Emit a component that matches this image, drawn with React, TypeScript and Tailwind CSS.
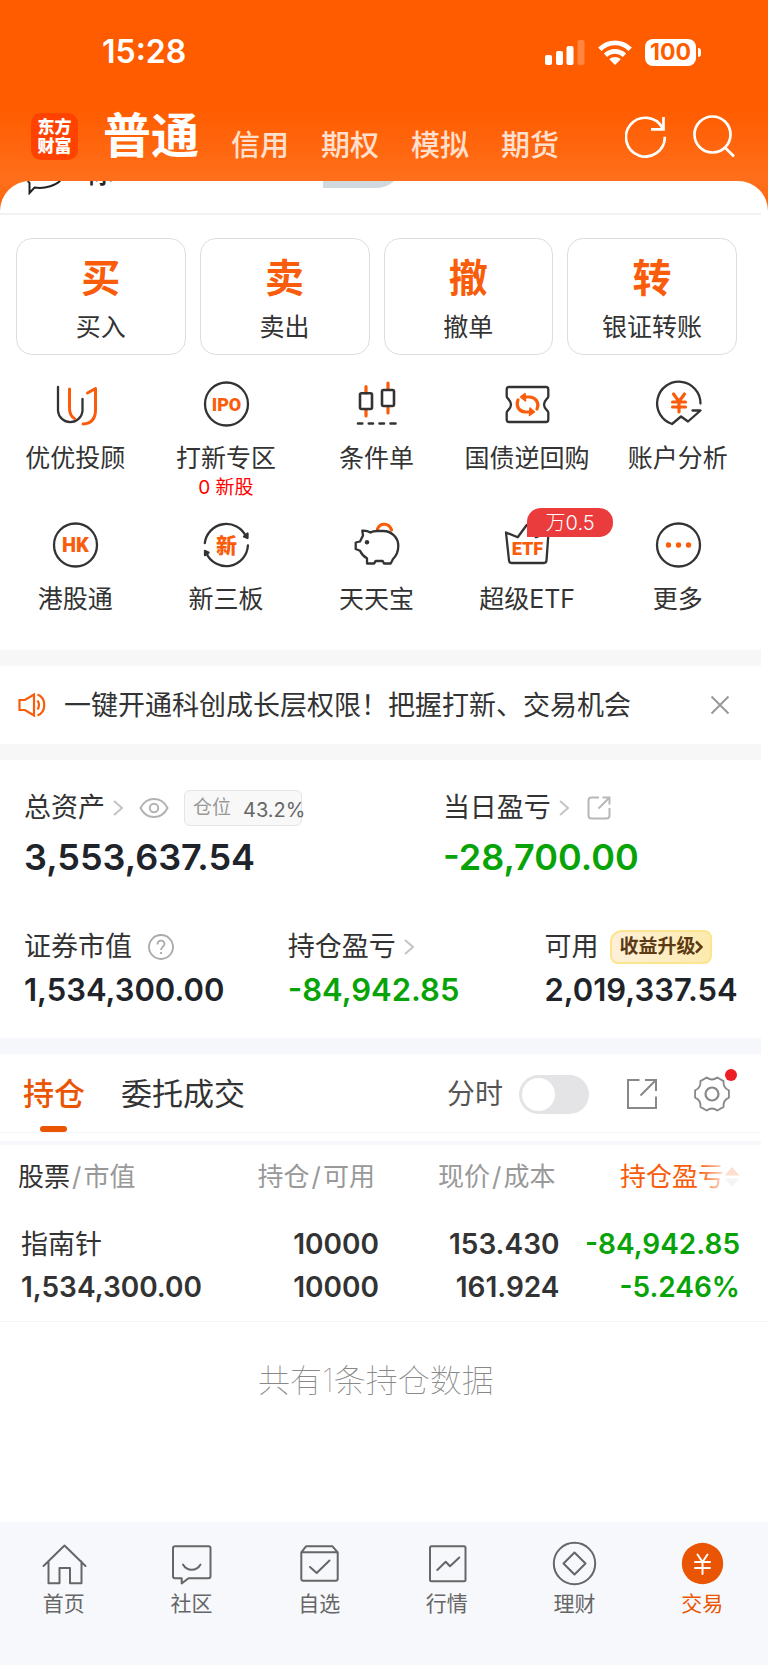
import React from 'react';

const ORANGE = '#f95d0b';
const DARK = '#333333';

type IconProps = { children: React.ReactNode };

// Base for the round function icons in the shortcut grid
const ShortcutSvg: React.FC<IconProps> = ({ children }) => (
  <svg
    viewBox="0 0 46 46"
    className="w-[46px] h-[46px] overflow-visible font-[Roboto,'Noto_Sans_CJK_SC',sans-serif]"
    fill="none"
    stroke={DARK}
    strokeWidth="2.3"
    strokeLinecap="round"
    strokeLinejoin="round"
    aria-hidden="true"
  >
    {children}
  </svg>
);

const NavSvg: React.FC<IconProps> = ({ children }) => (
  <svg
    viewBox="0 0 44 44"
    className="w-11 h-11 overflow-visible"
    fill="none"
    stroke="#666666"
    strokeWidth="2"
    strokeLinecap="round"
    strokeLinejoin="round"
    aria-hidden="true"
  >
    {children}
  </svg>
);

const Chevron: React.FC = () => (
  <svg viewBox="0 0 10 16" className="w-[10px] h-4" fill="none" stroke="#c4c4c4" strokeWidth="2" aria-hidden="true">
    <path d="M1 1L9 8L1 15" />
  </svg>
);

const tradeButtons = [
  { glyph: '买', label: '买入' },
  { glyph: '卖', label: '卖出' },
  { glyph: '撤', label: '撤单' },
  { glyph: '转', label: '银证转账' },
];

const shortcuts = [
  {
    label: '优优投顾',
    icon: (
      <ShortcutSvg>
        <path d="M6 6V30A12.3 12.3 0 0 0 30.5 30V18" />
        <path d="M17.5 8V27C17.5 32.5 19 35.5 22.5 37.5" stroke={ORANGE} strokeWidth="3" />
        <path d="M35.5 12L43.5 7.5V29C43.5 38 39 42.5 31 43" stroke={ORANGE} strokeWidth="3" />
      </ShortcutSvg>
    ),
  },
  {
    label: '打新专区',
    note: '0 新股',
    icon: (
      <ShortcutSvg>
        <circle cx="23.5" cy="23" r="21.5" />
        <text x="23.5" y="29.5" textAnchor="middle" fontSize="18" fontWeight="900" fill={ORANGE} stroke="none">
          IPO
        </text>
      </ShortcutSvg>
    ),
  },
  {
    label: '条件单',
    icon: (
      <ShortcutSvg>
        <path d="M13 5.5V12M13 28.5V35M35 2V8.5M35 25.5V32" stroke={ORANGE} strokeWidth="3.2" />
        <rect x="7" y="12.3" width="12" height="15.7" rx="1.5" strokeWidth="2.6" />
        <rect x="29" y="9" width="12" height="16" rx="1.5" strokeWidth="2.6" />
        <path d="M5 42.5H9.3M15.8 42.5H20M26.5 42.5H31M37.5 42.5H42.5" strokeWidth="2.6" />
      </ShortcutSvg>
    ),
  },
  {
    label: '国债逆回购',
    icon: (
      <ShortcutSvg>
        <path d="M5 6H42Q44.3 6 44.3 8.5V15.5C44.3 17.5 40 19 40 23.5C40 28 44.3 29.5 44.3 31.5V38.5Q44.3 41 42 41H5Q2.7 41 2.7 38.5V31.5C2.7 29.5 7 28 7 23.5C7 19 2.7 17.5 2.7 15.5V8.5Q2.7 6 5 6Z" />
        <path d="M14 19C11.5 25 15 30.5 21 31H27M33 28C35.5 22 32 16.5 26 16H20" stroke={ORANGE} strokeWidth="3.2" />
        <path d="M26 27L30.5 31L25.5 34.5ZM21 12.5L16.5 16L21.5 20Z" fill={ORANGE} stroke={ORANGE} strokeWidth="1.5" />
      </ShortcutSvg>
    ),
  },
  {
    label: '账户分析',
    icon: (
      <ShortcutSvg>
        <path d="M45.5 22.5A21.7 21.7 0 1 0 17 43L26 35.5L33 40.5L45.5 29.5H37.5" />
        <path d="M18.5 13L24 20.5L29.5 13M24 20.5V31M17.5 21H30.5M17.5 26H30.5" stroke={ORANGE} strokeWidth="3.2" />
      </ShortcutSvg>
    ),
  },
  {
    label: '港股通',
    icon: (
      <ShortcutSvg>
        <circle cx="23.5" cy="23" r="21.5" />
        <text x="23.5" y="30" textAnchor="middle" fontSize="20" fontWeight="900" fill={ORANGE} stroke="none">
          HK
        </text>
      </ShortcutSvg>
    ),
  },
  {
    label: '新三板',
    icon: (
      <ShortcutSvg>
        <path d="M1.8 21A21.7 21.7 0 0 1 43 14.5M44.9 23.5A21.7 21.7 0 0 1 3.3 31" />
        <path d="M44.5 11.5V16L41 14.5ZM2 33V29L5.5 30.5Z" fill={DARK} />
        <text x="23.5" y="30.5" textAnchor="middle" fontSize="21" fontWeight="900" fill={ORANGE} stroke="none">
          新
        </text>
      </ShortcutSvg>
    ),
  },
  {
    label: '天天宝',
    icon: (
      <ShortcutSvg>
        <path d="M24.5 7C27 .5 36 .5 38.5 8" stroke={ORANGE} strokeWidth="3.2" />
        <path d="M17.5 10.5C15 9 12 8.5 9.3 8.7L10 13.5L7 19.5L2.7 20.5V27L7 28.7C8.5 32 10.5 34.5 14 36.3V41.5H21L22.7 39H29.7L31 41.5H37.7L40 37C44 33 45.3 28.5 45.3 24C45.3 15 38 9 30.3 9H24Q20 9 17.5 10.5Z" />
        <circle cx="14" cy="20.3" r="2.2" fill={DARK} stroke="none" />
      </ShortcutSvg>
    ),
  },
  {
    label: '超级ETF',
    badge: '万0.5',
    icon: (
      <ShortcutSvg>
        <path d="M2 10.5L13.7 15.3L22.7 3L32 15.3L44.5 10.5L42.5 38.5Q42.3 41 40 41H7.5Q5.2 41 5 38.5Z" />
        <text x="23.5" y="33" textAnchor="middle" fontSize="18" fontWeight="900" fill={ORANGE} stroke="none">
          ETF
        </text>
      </ShortcutSvg>
    ),
  },
  {
    label: '更多',
    icon: (
      <ShortcutSvg>
        <circle cx="23.5" cy="23" r="21.5" />
        <g fill={ORANGE} stroke="none">
          <circle cx="13.5" cy="23" r="2.7" />
          <circle cx="23.5" cy="23" r="2.7" />
          <circle cx="33.5" cy="23" r="2.7" />
        </g>
      </ShortcutSvg>
    ),
  },
];

const navItems = [
  {
    label: '首页',
    icon: (
      <NavSvg>
        <path d="M1.5 23L22.5 2.5L43.5 23M6.5 18.5V40.3H17.5V25H28V40.3H39.5V18.5" />
      </NavSvg>
    ),
  },
  {
    label: '社区',
    icon: (
      <NavSvg>
        <path d="M6 3.3H39.5Q41.5 3.3 41.5 5.3V33.3Q41.5 35.3 39.5 35.3H19.5L12.7 40.5V35.3H6Q4 35.3 4 33.3V5.3Q4 3.3 6 3.3Z" />
        <path d="M14 21.5C18 28.5 27.5 28.5 31.5 21.5" />
      </NavSvg>
    ),
  },
  {
    label: '自选',
    icon: (
      <NavSvg>
        <path d="M4.3 9.3L9 3.3H35.5L40.7 9.3V35.7Q40.7 37.7 38.7 37.7H6.3Q4.3 37.7 4.3 35.7ZM4.3 9.3H40.7M13 24L19.7 30L32.5 17.5" />
      </NavSvg>
    ),
  },
  {
    label: '行情',
    icon: (
      <NavSvg>
        <rect x="5" y="3.3" width="35.5" height="35" rx="1.5" />
        <path d="M12.3 27L20.7 18.7L25 23.3L34.3 14.5" />
      </NavSvg>
    ),
  },
  {
    label: '理财',
    icon: (
      <NavSvg>
        <circle cx="22.5" cy="20.5" r="20.7" />
        <path d="M22.5 9.5L33.5 20.5L22.5 31.5L11.5 20.5Z" />
      </NavSvg>
    ),
  },
  {
    label: '交易',
    active: true,
    icon: (
      <NavSvg>
        <circle cx="22.5" cy="20.5" r="20.7" fill="#ea5504" stroke="none" />
        <path d="M17.5 11.5L22.5 19L27.5 11.5M22.5 19V31M15 19H30M15 25H30" stroke="#ffffff" />
      </NavSvg>
    ),
  },
];

const Header: React.FC = () => (
  <header className="pt-[30px] pb-[21px] text-white">
    <div className="h-11 flex items-center justify-between pl-[102px] pr-[67px]">
      <span className="text-[32px] leading-none font-semibold">15:28</span>
      <div className="flex items-center gap-[13px]">
        <svg viewBox="0 0 40 25" className="w-10 h-[25px]" fill="#ffffff" aria-hidden="true">
          <rect x="0" y="15" width="7" height="10" rx="2" />
          <rect x="11" y="11" width="7" height="14" rx="2" />
          <rect x="21.5" y="6" width="7" height="19" rx="2" />
          <rect x="32.5" y="0" width="7" height="25" rx="2" opacity="0.25" />
        </svg>
        <svg viewBox="0 0 34 25" className="w-[34px] h-[25px]" fill="none" stroke="#ffffff" strokeWidth="4.8" aria-hidden="true">
          <path d="M1.8 9.2C10.5 .8 23.5 .8 32.2 9.2" />
          <path d="M7.5 15.2C13 10 21 10 26.5 15.2" />
          <path d="M17 25L11.3 19.3C14.5 16.3 19.5 16.3 22.7 19.3Z" fill="#ffffff" stroke="none" />
        </svg>
        <div className="flex items-center gap-[2px]">
          <span className="w-[51px] h-[27px] rounded-lg bg-white text-[#ff5c00] text-[23px] leading-[27px] font-bold text-center">
            100
          </span>
          <span className="w-[3px] h-[9px] rounded-r-full bg-white" />
        </div>
      </div>
    </div>

    <div className="mt-[38px] h-12 flex items-end pl-[31px] pr-[33px]">
      <div className="w-[47px] h-[47px] shrink-0 rounded-[10px] bg-[#ff4200] flex items-center justify-center text-center text-[17px] leading-[19px] font-black">
        东方
        <br />
        财富
      </div>
      <nav className="flex items-end gap-8 ml-[25px] flex-1">
        <button className="text-[48px] leading-none font-bold">普通</button>
        <button className="text-[29px] leading-none font-medium text-[#ffe0cf]">信用</button>
        <button className="text-[29px] leading-none font-medium text-[#ffe0cf]">期权</button>
        <button className="text-[29px] leading-none font-medium text-[#ffe0cf]">模拟</button>
        <button className="text-[29px] leading-none font-medium text-[#ffe0cf]">期货</button>
      </nav>
      <div className="flex gap-[26px] pb-[2px]">
        <button aria-label="刷新">
          <svg viewBox="0 0 42 42" className="w-[42px] h-[42px]" fill="none" stroke="#ffffff" strokeWidth="2.7">
            <path d="M39.8 20.8A19.4 19.4 0 1 1 37.5 12M38.5 1V13.3H26" />
          </svg>
        </button>
        <button aria-label="搜索">
          <svg viewBox="0 0 42 42" className="w-[42px] h-[42px] overflow-visible" fill="none" stroke="#ffffff" strokeWidth="2.7">
            <circle cx="19.5" cy="18.5" r="18" />
            <path d="M32 31.5L41 40.5" />
          </svg>
        </button>
      </div>
    </div>
  </header>
);

// Message row that is scrolled mostly under the header
const MessagePeek: React.FC = () => (
  <div className="h-8 overflow-hidden">
    <div className="-mt-5 h-7 flex items-start pl-[26px]">
      <svg viewBox="0 0 38 34" className="w-[38px] h-[34px]" fill="none" stroke="#222222" strokeWidth="2" aria-hidden="true">
        <path d="M20 2C9 2 1 8 1 15C1 18 1.5 20 3.5 22V32L8.5 26.5C18 28 32 25 36 17C38 8 30 2 20 2Z" />
      </svg>
      <span className="ml-[22px] text-[28px] leading-6 font-medium text-[#222222]">你</span>
      <span className="ml-auto mr-[365px] w-[80px] h-[27px] rounded-bl-lg rounded-br-full bg-[#d0dade]" />
    </div>
  </div>
);

const Shortcuts: React.FC = () => (
  <section>
    <div className="grid grid-cols-4 gap-[14px] pl-4 pr-[31px] pt-[23px]">
      {tradeButtons.map((item) => (
        <button
          key={item.label}
          className="h-[117px] rounded-2xl border border-[#dddddd] flex flex-col items-center pt-[18px]"
        >
          <span className="text-[39px] leading-[42px] font-bold text-[#f95d0b]">{item.glyph}</span>
          <span className="mt-3 text-[25px] leading-8">{item.label}</span>
        </button>
      ))}
    </div>

    <div className="grid grid-cols-5 gap-y-5 pt-[26px] pr-[15px] pb-[35px]">
      {shortcuts.map((item) => (
        <button key={item.label} className="relative flex flex-col items-center justify-start">
          {item.icon}
          {item.badge && (
            <span className="absolute left-1/2 -top-[14px] w-[86px] h-[29px] rounded-[14px] rounded-bl-none bg-[#ea3b3d] text-white text-xl leading-[30px] font-light">
              {item.badge}
            </span>
          )}
          <span className="mt-[15px] text-[25px] leading-8">{item.label}</span>
          {item.note && <span className="text-[19px] leading-7 text-[#ff0000]">{item.note}</span>}
        </button>
      ))}
    </div>
  </section>
);

const Notice: React.FC = () => (
  <section className="h-[78px] flex items-center pl-[18px] pr-[38px]">
    <svg viewBox="0 0 28 24" className="w-7 h-6" fill="none" stroke={ORANGE} strokeWidth="2.2" aria-hidden="true">
      <path d="M1.5 7H7L16 1.5V22.5L7 17H1.5ZM19.5 7.5C21.5 10 21.5 14 19.5 16.5M19.5 1.5C28.5 5 28.5 19 19.5 22.5" />
    </svg>
    <p className="ml-[18px] pt-[2px] text-[27px] leading-9 flex-1 whitespace-nowrap">一键开通科创成长层权限！把握打新、交易机会</p>
    <button aria-label="关闭">
      <svg viewBox="0 0 20 20" className="w-5 h-5" fill="none" stroke="#999999" strokeWidth="2">
        <path d="M1.5 1.5L18.5 18.5M18.5 1.5L1.5 18.5" />
      </svg>
    </button>
  </section>
);

const Assets: React.FC = () => (
  <section className="pl-6 pr-[31px] pt-[30px] pb-[30px]">
    <div className="grid grid-cols-[47fr_33fr]">
      <div>
        <div className="h-9 flex items-center text-[27px]">
          <span>总资产</span>
          <span className="ml-2">
            <Chevron />
          </span>
          <button className="ml-4" aria-label="隐藏金额">
            <svg viewBox="0 0 30 22" className="w-[30px] h-[22px]" fill="none" stroke="#b3b3b3" strokeWidth="2">
              <path d="M1.5 11C7.5 -1 22.5 -1 28.5 11C22.5 23 7.5 23 1.5 11Z" />
              <circle cx="15" cy="11" r="4.2" />
            </svg>
          </button>
          <span className="ml-[15px] w-[118px] h-9 rounded-md border border-[#e5e5e5] bg-[#f8f8f8] flex items-center pl-2 whitespace-nowrap">
            <span className="text-[19px] text-[#999999]">仓位</span>
            <span className="ml-3 pt-1 text-xl leading-7 text-[#666666]">43.2%</span>
          </span>
        </div>
        <p className="mt-[9px] text-[36px] leading-[44px] font-semibold text-[#20242a]">3,553,637.54</p>
      </div>
      <div>
        <div className="h-9 flex items-center text-[27px]">
          <span>当日盈亏</span>
          <span className="ml-2">
            <Chevron />
          </span>
          <button className="ml-[18px]" aria-label="分享">
            <svg viewBox="0 0 24 24" className="w-6 h-6" fill="none" stroke="#b8b8b8" strokeWidth="2">
              <path d="M12 1.5H4.5Q1.5 1.5 1.5 4.5V19.5Q1.5 22.5 4.5 22.5H19.5Q22.5 22.5 22.5 19.5V12M11.5 12.5L22 2M15.5 1.5H22.5V8.5" />
            </svg>
          </button>
        </div>
        <p className="mt-[9px] text-[36px] leading-[44px] font-semibold text-[#07a307]">-28,700.00</p>
      </div>
    </div>

    <div className="grid grid-cols-[37%_36%_27%] mt-[50px]">
      <div>
        <div className="h-9 flex items-center text-[27px]">
          <span>证券市值</span>
          <button className="ml-4" aria-label="说明">
            <svg viewBox="0 0 26 26" className="w-[26px] h-[26px]" fill="none" stroke="#aaaaaa" strokeWidth="1.8">
              <circle cx="13" cy="13" r="12" />
              <path d="M9.5 10.5C9.5 5.5 16.5 5.5 16.5 10C16.5 12.5 13 12.8 13 16M13 18V20" />
            </svg>
          </button>
        </div>
        <p className="mt-[7px] text-[31px] leading-9 font-semibold text-[#20242a]">1,534,300.00</p>
      </div>
      <div>
        <div className="h-9 flex items-center text-[27px]">
          <span>持仓盈亏</span>
          <span className="ml-2">
            <Chevron />
          </span>
        </div>
        <p className="mt-[7px] text-[31px] leading-9 font-semibold text-[#07a307]">-84,942.85</p>
      </div>
      <div>
        <div className="h-9 flex items-center text-[27px]">
          <span>可用</span>
          <a
            href="#upgrade"
            className="ml-3 w-[102px] h-[34px] rounded-lg rounded-tl-xl border-2 border-[#fde58f] bg-linear-to-r from-[#fdf0d8] to-[#fdeaae] flex items-center justify-center text-[19px] font-bold text-[#5c3a14]"
          >
            收益升级
            <svg viewBox="0 0 8 14" className="w-2 h-[14px]" fill="none" stroke="#5c3a14" strokeWidth="2.5" aria-hidden="true">
              <path d="M1 1.5L6.5 7L1 12.5" />
            </svg>
          </a>
        </div>
        <p className="mt-[7px] text-[31px] leading-9 font-semibold text-[#20242a]">2,019,337.54</p>
      </div>
    </div>
  </section>
);

const Positions: React.FC = () => (
  <section>
    <div className="h-[79px] mr-[7px] pt-[2px] pl-[23px] pr-[31px] flex items-center border-b border-[#f3f3f3]">
      <button className="relative h-full text-[31px] font-medium text-[#ea5504]">
        持仓
        <span className="absolute bottom-0 left-[17px] w-[27px] h-[6px] rounded-full bg-[#ea5504]" />
      </button>
      <button className="ml-9 text-[31px]">委托成交</button>
      <label className="ml-auto flex items-center text-[28px] text-[#555555]">
        分时
        <input
          type="checkbox"
          role="switch"
          className="ml-4 appearance-none w-[70px] h-[39px] rounded-full bg-[#e4e4e6] p-[3px] before:block before:w-[33px] before:h-[33px] before:rounded-full before:bg-white"
        />
      </label>
      <button className="ml-[37px]" aria-label="分享持仓">
        <svg viewBox="0 0 32 32" className="w-8 h-8" fill="none" stroke="#888888" strokeWidth="2">
          <path d="M13.5 2H2V30H30V18.5M14.5 17.5L29.5 2.5M19 2H30V13" />
        </svg>
      </button>
      <button className="relative ml-9" aria-label="设置">
        <svg viewBox="0 0 36 36" className="w-9 h-9" fill="none" stroke="#888888" strokeWidth="1.8" strokeLinejoin="round">
          <path d="M34.9 14.4V21.6Q28.8 24.3 29.6 30.9L23.3 34.5Q18 30.5 12.7 34.5L6.4 30.9Q7.2 24.3 1.1 21.6V14.4Q7.2 11.7 6.4 5.1L12.7 1.5Q18 5.5 23.3 1.5L29.6 5.1Q28.8 11.7 34.9 14.4Z" />
          <circle cx="18" cy="18" r="6.5" strokeWidth="2.2" />
        </svg>
        <span className="absolute -top-[7px] -right-[7px] w-3 h-3 rounded-full bg-[#ee1d23]" />
      </button>
    </div>
    <div className="mt-2 mr-[7px] h-1 bg-[#f7f8fb]" />

    <div className="border-b border-[#f3f3f3] pl-[18px] pr-7 pb-3">
      <table className="w-full table-fixed">
        <thead className="text-[26px] leading-8 text-[#999999]">
          <tr>
            <th className="w-[31%] pt-4 pb-[30px] font-normal text-left whitespace-nowrap">
              <span className="text-[#333333]">股票</span>
              <span className="px-[2px]">/</span>市值
            </th>
            <th className="w-[19%] pt-4 pb-[30px] pr-1 font-normal text-right whitespace-nowrap">
              持仓<span className="px-[2px]">/</span>可用
            </th>
            <th className="w-[25%] pt-4 pb-[30px] pr-1 font-normal text-right whitespace-nowrap">
              现价<span className="px-[2px]">/</span>成本
            </th>
            <th className="w-[25%] pt-4 pb-[30px] font-normal text-right whitespace-nowrap">
              <button className="relative inline-flex items-center text-[#f95d0b]">
                持仓盈亏
                <svg viewBox="0 0 16 22" className="w-4 h-[22px]" aria-hidden="true">
                  <path d="M8 1L15.5 9.5H.5Z" fill="#f95d0b" />
                  <path d="M8 21L15.5 12.5H.5Z" fill="#c8c8c8" />
                </svg>
                <span className="absolute inset-y-0 right-0 w-10 bg-linear-to-r from-white/0 via-white/80 via-60% to-white/80" />
              </button>
            </th>
          </tr>
        </thead>
        <tbody className="text-[28px] leading-[43px] font-semibold">
          <tr>
            <td className="pl-[3px]">
              <div className="text-[27px] font-normal">指南针</div>
              <div>1,534,300.00</div>
            </td>
            <td className="text-right">
              <div>10000</div>
              <div>10000</div>
            </td>
            <td className="text-right">
              <div>153.430</div>
              <div>161.924</div>
            </td>
            <td className="text-right text-[#07a307]">
              <div>-84,942.85</div>
              <div>-5.246%</div>
            </td>
          </tr>
        </tbody>
      </table>
    </div>
    <p className="pt-10 pb-10 pr-4 text-center text-[32px] leading-[38px] font-thin text-[#888888]">共有1条持仓数据</p>
  </section>
);

const BottomNav: React.FC = () => (
  <nav className="mt-auto grid grid-cols-6 bg-[#f7f8fb] pt-[21px] pb-12 pr-[2px]">
    {navItems.map((item) => (
      <a
        key={item.label}
        href="#"
        className={`flex flex-col items-center text-[21px] leading-[26px] ${item.active ? 'text-[#ea5504]' : 'text-[#666666]'}`}
      >
        {item.icon}
        <span className="mt-1">{item.label}</span>
      </a>
    ))}
  </nav>
);

const App: React.FC = () => {
  return (
    <div
      lang="zh-CN"
      className="min-h-screen flex flex-col text-[#333333] font-[Inter,'Noto_Sans_CJK_SC',sans-serif] bg-[linear-gradient(#ff5c00_108px,#ff6f1b_181px,#ff6208_213px)]"
    >
      <Header />
      <main className="flex-1 flex flex-col rounded-t-[30px] overflow-hidden bg-white">
        <MessagePeek />
        <div className="h-[2px] mr-[7px] bg-[#f2f2f3]" />
        <Shortcuts />
        <div className="h-4 mr-[7px] bg-[#f7f7f8]" />
        <Notice />
        <div className="h-4 mr-[7px] bg-[#f7f7f8]" />
        <Assets />
        <div className="h-4 mr-[7px] bg-[#f5f7fa]" />
        <Positions />
        <BottomNav />
      </main>
    </div>
  );
};

export default App;
